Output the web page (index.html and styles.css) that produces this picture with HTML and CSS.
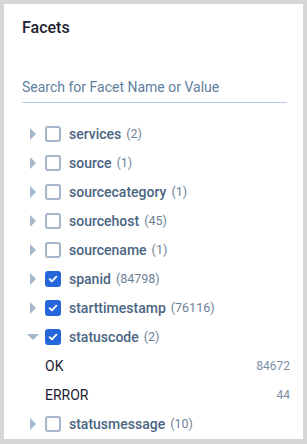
FILE: index.html
```html
<!DOCTYPE html>
<html lang="en">
<head>
<meta charset="UTF-8">
<title>Facets</title>
<link rel="stylesheet" href="styles.css">
</head>
<body>

<div class="panel">
    <h2 class="title">Facets</h2>
    <input class="search" type="text" placeholder="Search for Facet Name or Value">

    <ul class="facets">
        <li class="facet">
            <span class="caret"></span><span class="box"></span>
            <span class="name">services</span><span class="count">(2)</span>
        </li>
        <li class="facet">
            <span class="caret"></span><span class="box"></span>
            <span class="name">source</span><span class="count">(1)</span>
        </li>
        <li class="facet">
            <span class="caret"></span><span class="box"></span>
            <span class="name">sourcecategory</span><span class="count">(1)</span>
        </li>
        <li class="facet">
            <span class="caret"></span><span class="box"></span>
            <span class="name">sourcehost</span><span class="count">(45)</span>
        </li>
        <li class="facet">
            <span class="caret"></span><span class="box"></span>
            <span class="name">sourcename</span><span class="count">(1)</span>
        </li>
        <li class="facet">
            <span class="caret"></span><span class="box checked"><svg viewBox="0 0 16 16"><path d="M3.5 8.2l3 3 6-6.4" /></svg></span>
            <span class="name">spanid</span><span class="count">(84798)</span>
        </li>
        <li class="facet">
            <span class="caret"></span><span class="box checked"><svg viewBox="0 0 16 16"><path d="M3.5 8.2l3 3 6-6.4" /></svg></span>
            <span class="name">starttimestamp</span><span class="count">(76116)</span>
        </li>
        <li class="facet">
            <span class="caret open"></span><span class="box checked"><svg viewBox="0 0 16 16"><path d="M3.5 8.2l3 3 6-6.4" /></svg></span>
            <span class="name">statuscode</span><span class="count">(2)</span>
        </li>
        <li class="value">
            <span class="value-name">OK</span><span class="value-count">84672</span>
        </li>
        <li class="value">
            <span class="value-name">ERROR</span><span class="value-count">44</span>
        </li>
        <li class="facet">
            <span class="caret"></span><span class="box"></span>
            <span class="name">statusmessage</span><span class="count">(10)</span>
        </li>
    </ul>
</div>

</body>
</html>
```

FILE: styles.css
```css
:root {
    --ink: #1c2232;
    --label: #4a6582;
    --muted: #6d8196;
    --line: #b9cbdc;
    --box: #a3b6ca;
    --blue: #2566d8;
}

html {
    background: #d6d6d6;
}

body {
    margin: 0;
    padding: 4px 4px 5px 4px;
    font-family: "Roboto", "Inter", sans-serif;
}

.panel {
    background: #fff;
    width: 299px;
    height: 435px;
    box-sizing: border-box;
    padding: 14px 16px 0 18px;
    overflow: hidden;
}

.title {
    margin: 0;
    font-size: 16px;
    font-weight: 500;
    color: var(--ink);
    line-height: 20px;
}

.search {
    display: block;
    width: 100%;
    box-sizing: border-box;
    margin-top: 40px;
    padding: 0 0 6px 0;
    border: none;
    border-bottom: 1px solid var(--line);
    font-family: inherit;
    font-size: 14px;
    line-height: 18px;
    outline: none;
    background: transparent;
}

.search::placeholder {
    color: #5f7f9f;
}

.facets {
    list-style: none;
    margin: 16px 0 0 0;
    padding: 0;
}

.facet,
.value {
    display: flex;
    align-items: center;
    height: 29px;
}

.caret {
    flex-shrink: 0;
    width: 0;
    height: 0;
    margin-left: 8px;
    border-top: 6px solid transparent;
    border-bottom: 6px solid transparent;
    border-left: 6px solid var(--box);
}

.caret.open {
    margin-left: 5px;
    margin-right: -3px;
    border-left: 6px solid transparent;
    border-right: 6px solid transparent;
    border-top: 6px solid var(--box);
    border-bottom: none;
}

.box {
    flex-shrink: 0;
    width: 16px;
    height: 16px;
    margin-left: 9px;
    box-sizing: border-box;
    border: 2px solid var(--box);
    border-radius: 3px;
    display: flex;
    align-items: center;
    justify-content: center;
}

.box.checked {
    background: var(--blue);
    border-color: var(--blue);
}

.box svg {
    width: 14px;
    height: 14px;
    fill: none;
    stroke: #fff;
    stroke-width: 2.4;
    stroke-linecap: round;
    stroke-linejoin: round;
}

.name {
    margin-left: 8px;
    font-size: 14px;
    font-weight: 500;
    color: var(--label);
}

.count {
    margin-left: 5px;
    font-size: 12.5px;
    color: var(--muted);
}

.value {
    padding-left: 23px;
    justify-content: space-between;
}

.value-name {
    font-size: 14px;
    color: var(--ink);
}

.value-count {
    font-size: 12px;
    color: #7b90a6;
    margin-right: -3px;
}
```
